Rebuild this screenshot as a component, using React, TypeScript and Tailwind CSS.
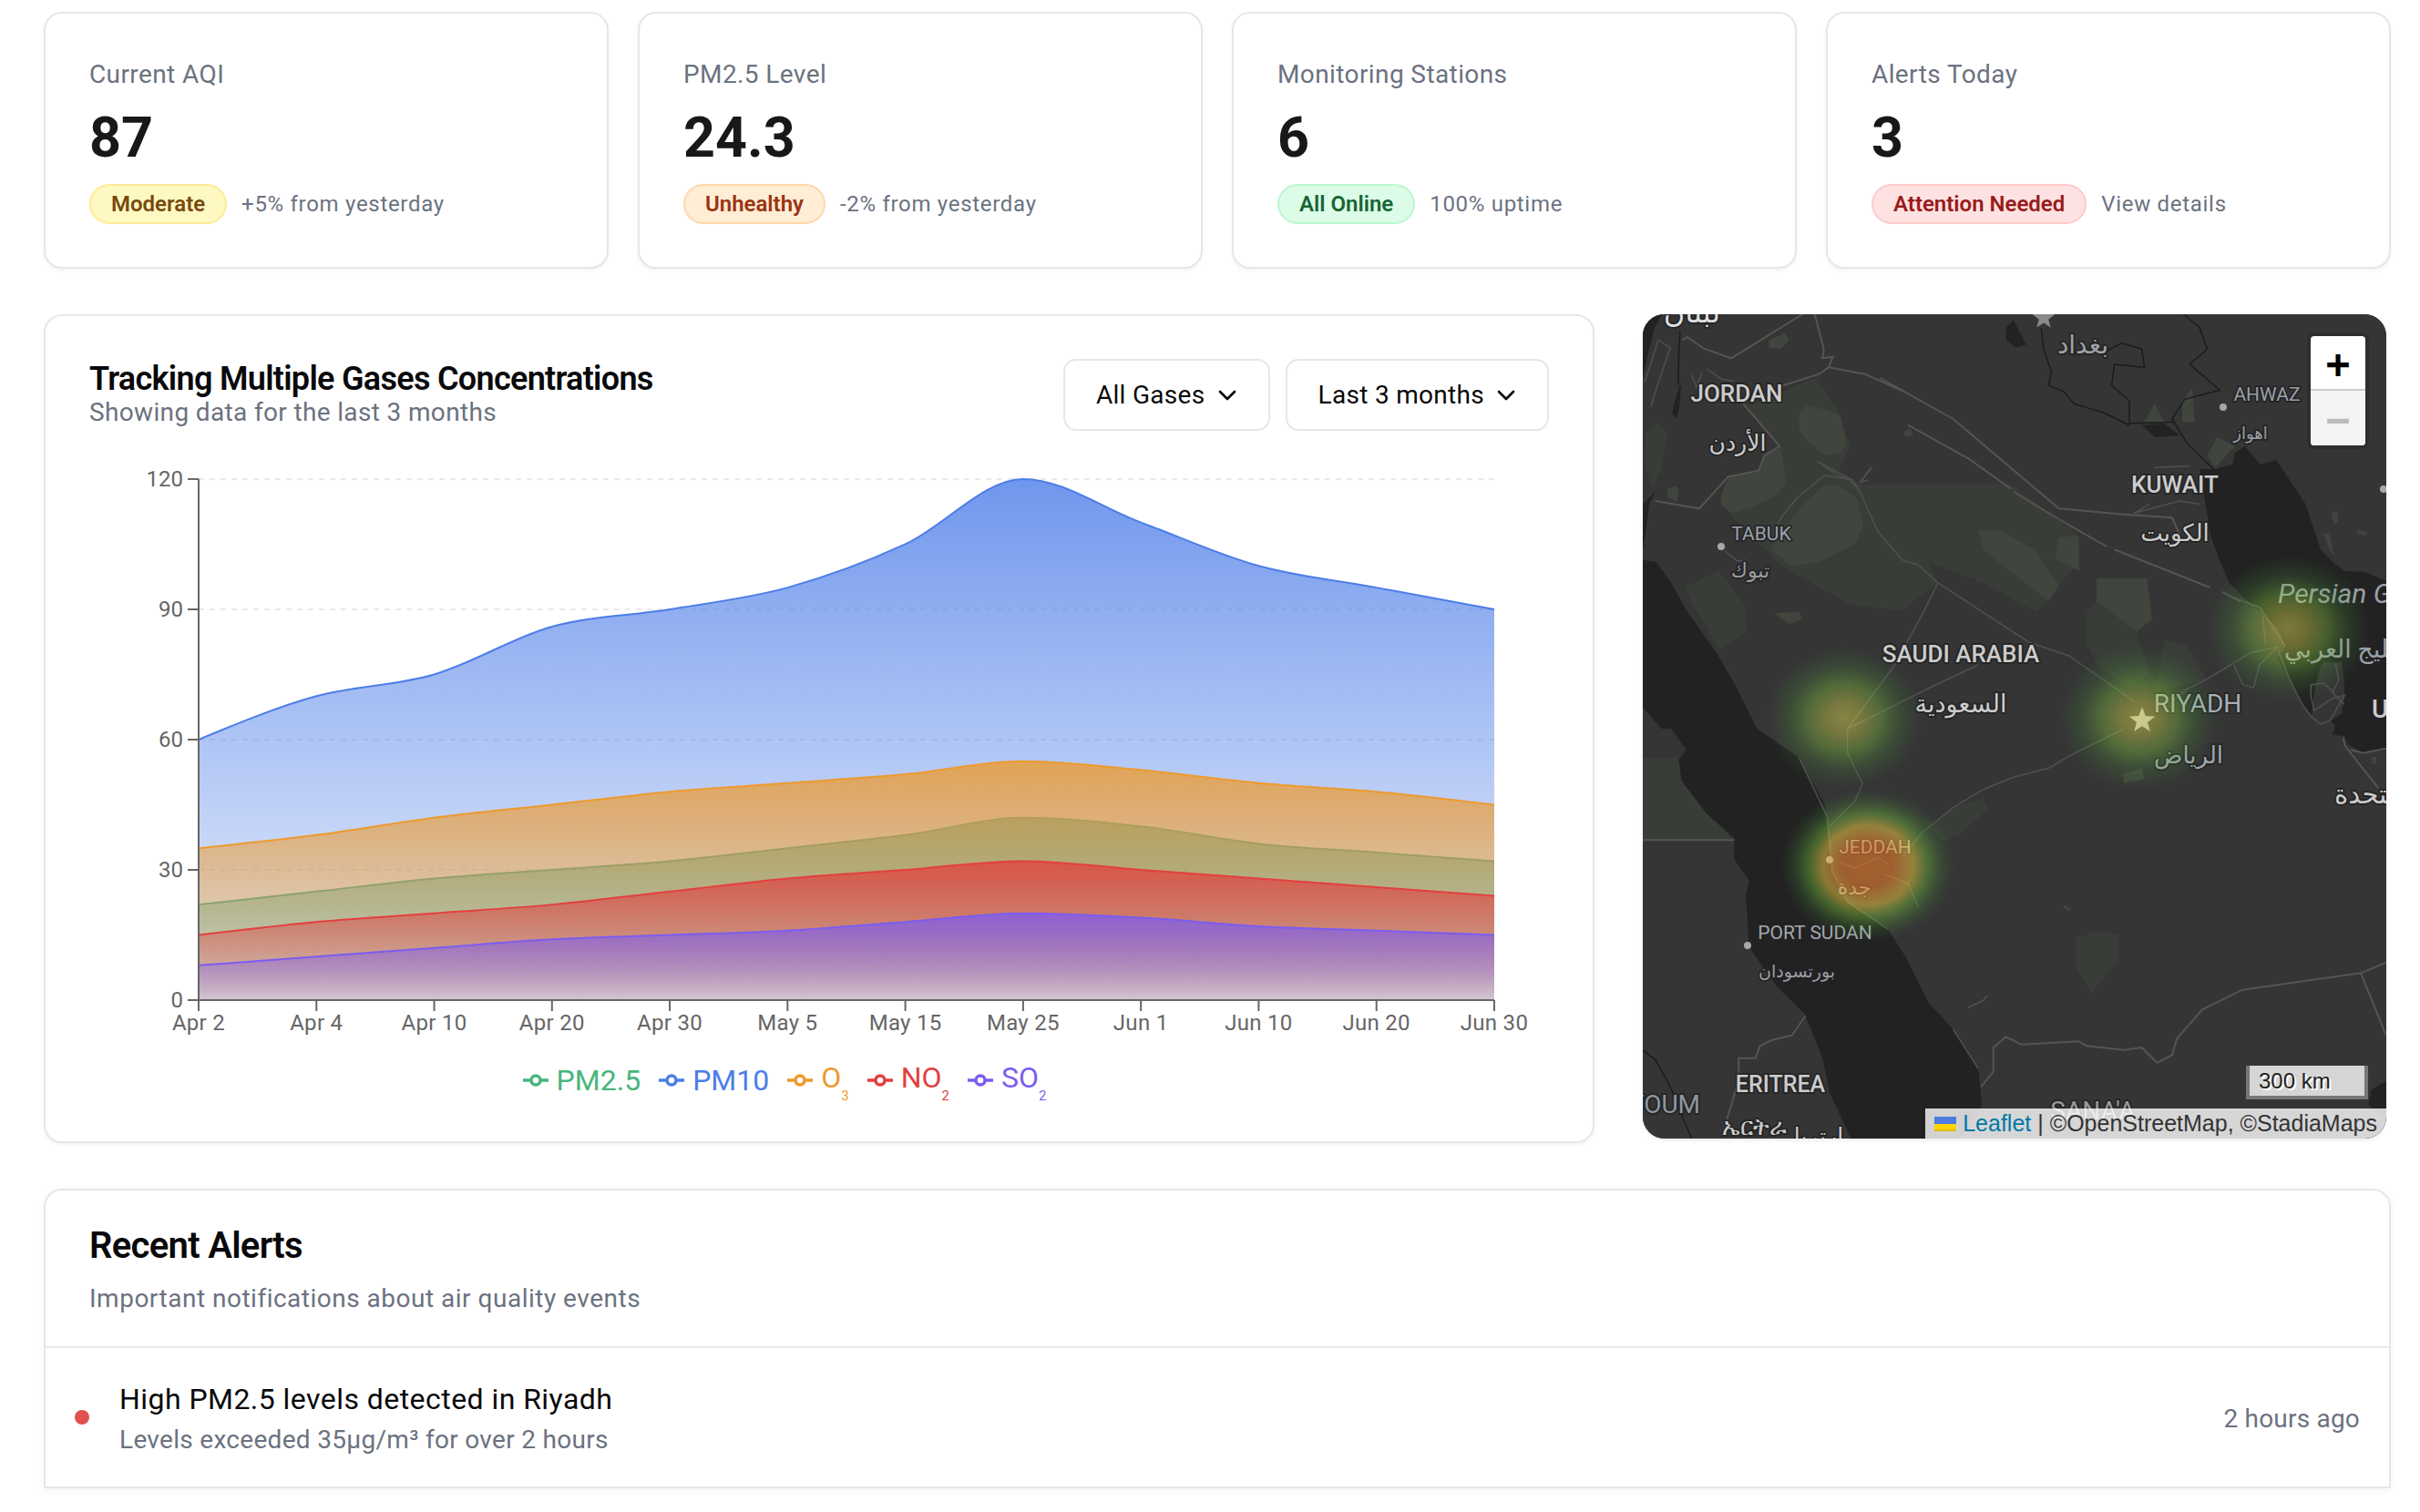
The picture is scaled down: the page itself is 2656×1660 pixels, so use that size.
import React from "react";
import { ChevronDown } from "lucide-react";

const FONT = "font-['Roboto','Liberation_Sans',sans-serif]";

/* ---------- stats ---------- */
const stats = [
  { label: "Current AQI", value: "87", badge: "Moderate", cls: "bg-[#fef9c3] border-[#fdeb94] text-[#78490f]", note: "+5% from yesterday" },
  { label: "PM2.5 Level", value: "24.3", badge: "Unhealthy", cls: "bg-[#ffedd5] border-[#fed7aa] text-[#9a3412]", note: "-2% from yesterday" },
  { label: "Monitoring Stations", value: "6", badge: "All Online", cls: "bg-[#dcfce7] border-[#bbf7d0] text-[#166534]", note: "100% uptime" },
  { label: "Alerts Today", value: "3", badge: "Attention Needed", cls: "bg-[#fee2e2] border-[#fecaca] text-[#991b1b]", note: "View details" },
];

function StatCard({ s }: { s: (typeof stats)[number] }) {
  return (
    <div className="h-[282px] rounded-[20px] border-2 border-[#e5e7eb] bg-white px-12 pt-[50px] shadow-[0_2px_4px_rgba(0,0,0,0.05)]">
      <div className="text-[28px] leading-[34px] tracking-[0.4px] text-[#6b7280]">{s.label}</div>
      <div className="mt-[16px] text-[61px] font-bold leading-[72px] text-[#18181b]">{s.value}</div>
      <div className="mt-[15px] flex items-center gap-4">
        <span className={`flex h-[44px] items-center rounded-full border-2 px-[22px] text-[24px] font-semibold ${s.cls}`}>{s.badge}</span>
        <span className="text-[24px] tracking-[0.7px] text-[#6b7280]">{s.note}</span>
      </div>
    </div>
  );
}

/* ---------- chart ---------- */
const labels = ["Apr 2", "Apr 4", "Apr 10", "Apr 20", "Apr 30", "May 5", "May 15", "May 25", "Jun 1", "Jun 10", "Jun 20", "Jun 30"];
const series = [
  { id: "pm25", color: "#48b57c", data: [22, 25, 28, 30, 32, 35, 38, 42, 40, 36, 34, 32] },
  { id: "pm10", color: "#4c7de8", data: [60, 70, 75, 86, 90, 95, 105, 120, 110, 100, 95, 90] },
  { id: "o3", color: "#ed9a2e", data: [35, 38, 42, 45, 48, 50, 52, 55, 53, 50, 48, 45] },
  { id: "no2", color: "#e2403f", data: [15, 18, 20, 22, 25, 28, 30, 32, 30, 28, 26, 24] },
  { id: "so2", color: "#7c5cf0", data: [8, 10, 12, 14, 15, 16, 18, 20, 19, 17, 16, 15] },
];
const X0 = 120; // svg coords: svg starts at page x=98, y=500
const Y0 = 598;
const PXX = 129.27;
const PXY = 4.767;
const px = (i: number) => X0 + i * PXX;
const py = (v: number) => Y0 - v * PXY;

function monotonePath(ys: number[]) {
  const n = ys.length;
  const xs = ys.map((_, i) => px(i));
  const yy = ys.map(py);
  const sign = (v: number) => (v < 0 ? -1 : 1);
  const t: number[] = new Array(n).fill(0);
  for (let i = 1; i < n - 1; i++) {
    const h0 = xs[i] - xs[i - 1];
    const h1 = xs[i + 1] - xs[i];
    const s0 = (yy[i] - yy[i - 1]) / h0;
    const s1 = (yy[i + 1] - yy[i]) / h1;
    const p = (s0 * h1 + s1 * h0) / (h0 + h1);
    t[i] = (sign(s0) + sign(s1)) * Math.min(Math.abs(s0), Math.abs(s1), 0.5 * Math.abs(p)) || 0;
  }
  t[0] = (3 * (yy[1] - yy[0])) / (xs[1] - xs[0]) / 2 - t[1] / 2;
  t[n - 1] = (3 * (yy[n - 1] - yy[n - 2])) / (xs[n - 1] - xs[n - 2]) / 2 - t[n - 2] / 2;
  let d = `M${xs[0]},${yy[0]}`;
  for (let i = 0; i < n - 1; i++) {
    const dx = (xs[i + 1] - xs[i]) / 3;
    d += `C${xs[i] + dx},${yy[i] + dx * t[i]} ${xs[i + 1] - dx},${yy[i + 1] - dx * t[i + 1]} ${xs[i + 1]},${yy[i + 1]}`;
  }
  return d;
}

function Chart() {
  return (
    <svg width="1602" height="650" className="block font-['Roboto','Liberation_Sans',sans-serif]">
      <defs>
        {series.map((s) => (
          <linearGradient key={s.id} id={`g-${s.id}`} x1="0" y1="0" x2="0" y2="1">
            <stop offset="0%" stopColor={s.color} stopOpacity="0.8" />
            <stop offset="100%" stopColor={s.color} stopOpacity="0.1" />
          </linearGradient>
        ))}
      </defs>
      {[120, 90, 60, 30].map((v) => (
        <line key={v} x1={X0} x2={px(11)} y1={py(v)} y2={py(v)} stroke="#e9e9e9" strokeWidth="2" strokeDasharray="6 6" />
      ))}
      {series.map((s) => {
        const d = monotonePath(s.data);
        return (
          <g key={s.id}>
            <path d={`${d}L${px(11)},${Y0}L${X0},${Y0}Z`} fill={`url(#g-${s.id})`} />
            <path d={d} fill="none" stroke={s.color} strokeWidth="2" />
          </g>
        );
      })}
      <line x1={X0} x2={X0} y1={py(120)} y2={Y0} stroke="#666" strokeWidth="2" />
      <line x1={X0} x2={px(11)} y1={Y0} y2={Y0} stroke="#666" strokeWidth="2" />
      {[0, 30, 60, 90, 120].map((v) => (
        <g key={v}>
          <line x1={X0 - 12} x2={X0} y1={py(v)} y2={py(v)} stroke="#666" strokeWidth="2" />
          <text x={X0 - 17} y={py(v) + 8} textAnchor="end" fontSize="24" fill="#666">{v}</text>
        </g>
      ))}
      {labels.map((l, i) => (
        <g key={l}>
          <line x1={px(i)} x2={px(i)} y1={Y0} y2={Y0 + 12} stroke="#666" strokeWidth="2" />
          <text x={px(i)} y={Y0 + 33} textAnchor="middle" fontSize="24" letterSpacing="0.3" fill="#666">{l}</text>
        </g>
      ))}
    </svg>
  );
}

function LegendIcon({ color }: { color: string }) {
  return (
    <svg width="28" height="16" viewBox="0 0 28 16" className="block">
      <line x1="0" x2="28" y1="8" y2="8" stroke={color} strokeWidth="3.5" />
      <circle cx="14" cy="8" r="5" fill="#fff" stroke={color} strokeWidth="3.5" />
    </svg>
  );
}

const legend = [
  { color: "#48b57c", text: "PM2.5", sub: "" },
  { color: "#4c7de8", text: "PM10", sub: "" },
  { color: "#ed9a2e", text: "O", sub: "3" },
  { color: "#e2403f", text: "NO", sub: "2" },
  { color: "#7c5cf0", text: "SO", sub: "2" },
];

/* ---------- map ---------- */
const mk = (ox: number, f: number, oy: number) => (p: number[]) => {
  const out: string[] = [];
  for (let i = 0; i < p.length; i += 2) out.push(`${(ox + p[i] / f).toFixed(1)},${(oy + p[i + 1] / 3).toFixed(1)}`);
  return out.join(" ");
};
const Z3 = mk(1790, 1.81, 340);
const Z4 = mk(1790, 1.81, 800);
const Z10 = mk(2380, 3, 560);
const Z11 = mk(1790, 3, 340);
const Z12 = mk(1790, 3, 1080);

const water = [
  // Red Sea
  Z3([0, 820, 50, 830, 80, 900, 110, 990, 170, 1130, 205, 1230, 250, 1380]) + " " +
    Z4([330, 90, 385, 250, 390, 330, 400, 470, 430, 570, 510, 660, 545, 750, 590, 900, 640, 990, 690, 1120, 697, 1240, 650, 1360, 440, 1360, 395, 1200, 380, 1080, 345, 940, 290, 850, 235, 720, 228, 550, 235, 500, 205, 430, 205, 360, 150, 280, 100, 170, 95, 100, 110, 70, 80, 0]) + " " +
    Z3([60, 1380, 24, 1310, 0, 1310]),
  // Persian Gulf
  Z3([1130, 525, 1160, 525, 1195, 510, 1200, 470, 1220, 450, 1250, 510, 1282, 495, 1340, 640, 1370, 790, 1400, 840]) + " " +
    Z10([580, 200, 650, 205, 730, 240, 730, 785, 640, 800, 590, 770, 580, 745, 540, 740, 550, 710, 535, 695, 570, 670, 580, 620, 578, 560, 570, 500, 510, 500, 495, 530, 480, 600, 470, 680, 440, 640, 400, 560, 360, 490, 385, 450, 360, 390, 310, 340, 250, 290, 200, 240, 170, 170, 140, 90]),
  // Aqaba, Med, Dead Sea, lake
  Z11([80, 600, 60, 640, 50, 720, 40, 790, 30, 790, 30, 650]),
  Z11([30, 0, 110, 0, 78, 60, 60, 130, 40, 220, 30, 220]),
  Z11([160, 250, 145, 300, 135, 340, 150, 358, 158, 330, 165, 250]),
  Z3([745, 60, 760, 35, 785, 115, 765, 125, 745, 100]),
  Z3([1015, 380, 1060, 375, 1090, 415, 1040, 420]),
  Z4([1500, 1160, 1470, 1190, 1465, 1240, 1500, 1280]),
];
const park1 = [
  Z3([230, 320, 365, 225, 410, 330, 435, 450, 410, 540, 455, 575, 755, 575, 890, 745, 880, 850, 805, 995, 700, 900, 590, 830, 610, 900, 540, 990, 440, 975, 300, 845, 200, 680, 180, 620, 300, 460]),
  Z3([105, 915, 175, 860, 225, 970, 230, 1060, 175, 1120]),
  Z3([905, 1000, 925, 960, 1005, 1060, 1030, 1200, 990, 1240, 930, 1180, 905, 1100]),
  Z3([1060, 1090, 1100, 1100, 1145, 1220, 1040, 1260]),
  Z4([0, 95, 95, 95, 110, 170, 200, 365, 0, 365]),
  Z4([585, 310, 610, 305, 640, 260, 700, 230, 710, 265, 650, 350, 620, 370]),
  Z4([885, 690, 930, 665, 970, 680, 970, 760, 915, 870, 885, 790]),
  Z11([50, 400, 90, 370, 120, 410, 100, 530, 70, 590, 45, 500]),
];
const park2 = [
  Z11([555, 340, 580, 315, 640, 330, 690, 350, 710, 440, 690, 470, 640, 480, 590, 440, 555, 400]),
  Z11([300, 600, 325, 550, 420, 530, 440, 480, 495, 455, 510, 570, 480, 610, 400, 650, 330, 670, 295, 640]),
  Z11([480, 750, 560, 650, 640, 575, 680, 580, 745, 620, 765, 710, 740, 770, 620, 830, 530, 845, 460, 790]),
  Z3([690, 725, 730, 725, 800, 790, 850, 910, 830, 960, 760, 870, 700, 790]),
  Z3([850, 750, 890, 745, 890, 860, 843, 820]),
  Z3([925, 885, 1025, 885, 1035, 1020, 1005, 1060, 925, 960]),
  Z3([285, 1000, 335, 995, 340, 1020, 315, 1035]),
  Z3([543, 400, 555, 390, 560, 415, 545, 420]),
  Z11([120, 590, 150, 580, 158, 600, 150, 635, 120, 615]),
  Z11([455, 100, 510, 75, 520, 100, 495, 130, 455, 125]),
  Z4([975, 150, 1015, 130, 1020, 165, 980, 180]),
  Z3([1020, 370, 1040, 310, 1060, 370]),
  Z3([1095, 300, 1115, 260, 1120, 370, 1095, 370]),
  Z3([1145, 480, 1165, 420, 1200, 450, 1160, 520]),
  Z10([535, 10, 555, 5, 560, 40, 545, 45]),
  Z10([615, 65, 650, 70, 650, 85, 625, 78]),
  Z10([510, 75, 530, 80, 545, 150, 530, 130]),
  Z10([668, 815, 685, 810, 685, 835, 668, 835]),
];
const borders = [
  Z11([565, 15, 330, 160, 240, 128, 185, 90, 170, 100]),
  Z11([605, 15, 635, 130, 630, 160, 665, 155, 650, 190, 620, 212, 500, 250]),
  Z11([650, 190, 770, 212, 900, 270]),
  Z11([370, 310, 490, 450, 440, 480, 420, 530, 320, 550, 225, 655, 80, 630]),
  Z3([495, 225, 640, 360, 850, 655, 985, 675, 1075, 685, 1095, 760]),
  Z3([850, 690, 945, 780]),
  Z3([960, 790, 1150, 915]),
  Z3([1175, 930, 1210, 960]),
  Z3([550, 380, 670, 490, 755, 590]),
  Z3([760, 600, 850, 690]),
  Z4([1500, 770, 1450, 805, 1215, 860, 1135, 925, 1085, 1020, 1075, 1075, 1045, 1100, 1015, 1050, 980, 1058, 905, 1045, 890, 1030, 775, 1040, 745, 1015, 720, 1050, 720, 1130, 695, 1180]),
  Z4([1450, 805, 1500, 1010]),
  Z12([575, 105, 530, 170, 465, 185, 425, 205, 410, 245, 355, 245, 355, 290, 345, 350, 300, 500]),
  Z4([0, 367, 205, 367]),
  Z10([575, 750, 580, 775, 690, 915]),
  Z10([600, 790, 640, 800, 717, 785]),
];
const roads = [
  Z3([370, 500, 440, 560, 455, 600, 490, 730, 540, 825, 570, 840, 610, 900, 790, 1095, 870, 1140, 1000, 1290]),
  Z3([440, 560, 385, 545, 330, 620, 300, 680, 290, 715]),
  Z3([455, 570, 478, 520]),
  Z3([610, 900, 580, 1000, 520, 1180, 430, 1380]),
  Z3([690, 1170, 600, 1240, 430, 1380]),
  Z4([430, 0, 430, 80, 460, 180, 445, 240, 395, 320]),
  Z4([335, 100, 390, 290, 400, 470, 430, 570, 510, 660]),
  Z4([980, 0, 870, 90, 830, 130, 760, 160, 700, 200, 640, 260, 580, 340, 540, 420]),
  Z4([505, 480, 550, 510, 572, 590]),
  Z4([415, 440, 445, 460, 490, 425, 510, 445]),
  Z10([360, 450, 270, 470, 130, 555, 60, 590, 0, 640]),
  Z10([360, 450, 300, 510, 280, 585, 245, 575, 215, 510]),
  Z10([385, 450, 300, 320, 220, 290]),
  Z10([360, 460, 400, 560, 440, 640, 470, 680]),
  Z10([320, 440, 310, 350]),
  Z10([470, 680, 500, 705, 530, 695, 580, 610, 540, 620, 480, 660, 468, 610, 470, 575, 510, 570, 545, 600]),
  Z10([550, 505, 560, 560, 540, 600, 578, 640]),
  Z11([45, 240, 90, 100, 130, 125, 90, 240, 65, 320]),
  Z11([250, 195, 300, 230, 340, 235]),
  Z11([200, 215, 215, 255, 235, 205]),
  Z11([310, 795, 350, 828, 380, 825]),
  Z11([615, 500, 680, 545, 720, 560, 755, 600]),
  Z11([792, 518, 755, 568, 780, 562]),
  Z4([860, 585, 872, 598]),
  Z4([670, 918, 700, 895, 708, 878]),
  Z4([640, 990, 690, 1120]),
  Z3([1030, 640, 1000, 670]),
  Z3([1000, 670, 1090, 630, 1130, 640]),
  Z3([1040, 520, 1110, 515]),
];
const darkLines = [
  Z11([162, 70, 158, 130, 155, 250]),
  Z3([815, 60, 820, 130, 835, 205, 830, 250, 860, 270, 880, 310, 940, 340, 990, 380]),
  Z3([945, 135, 975, 110, 1015, 130, 1020, 190, 960, 180, 955, 250, 990, 300, 990, 375, 1080, 370]),
  Z3([1095, 10, 1130, 60, 1145, 130, 1110, 180, 1170, 265, 1100, 295, 1075, 360, 1105, 440, 1160, 530]),
  Z12([40, 220, 80, 250, 130, 340, 170, 440, 200, 510]),
];

type L = { t: string; x: number; y: number; s: number; c: string; a?: "start" | "middle" | "end"; w?: number; i?: boolean };
const mapLabels: L[] = [
  { t: "لبنان", x: 1857, y: 354, s: 32, c: "#ddd", a: "middle" },
  { t: "JORDAN", x: 1906, y: 441, s: 26, c: "#ccc", a: "middle", w: 500 },
  { t: "الأردن", x: 1907, y: 495, s: 25, c: "#ccc", a: "middle" },
  { t: "TABUK", x: 1933, y: 593, s: 21, c: "#9aa1ad", a: "middle" },
  { t: "تبوك", x: 1921, y: 634, s: 22, c: "#9a9aa0", a: "middle" },
  { t: "بغداد", x: 2286, y: 388, s: 28, c: "#a0a0a8", a: "middle" },
  { t: "AHWAZ", x: 2488, y: 440, s: 21, c: "#999fa8", a: "middle" },
  { t: "اهواز", x: 2470, y: 482, s: 18, c: "#999fa8", a: "middle" },
  { t: "KUWAIT", x: 2387, y: 541, s: 26, c: "#ccc", a: "middle", w: 500 },
  { t: "الكويت", x: 2387, y: 594, s: 26, c: "#ccc", a: "middle" },
  { t: "SAUDI ARABIA", x: 2152, y: 727, s: 26, c: "#ccc", a: "middle", w: 500 },
  { t: "السعودية", x: 2152, y: 782, s: 27, c: "#ccc", a: "middle" },
  { t: "Persian Gulf", x: 2500, y: 662, s: 30, c: "#9aa0a8", a: "start", i: true },
  { t: "الخليج العربي", x: 2507, y: 722, s: 27, c: "#9aa0a8", a: "start" },
  { t: "RIYADH", x: 2412, y: 782, s: 28, c: "#a8aeb8", a: "middle" },
  { t: "الرياض", x: 2402, y: 838, s: 26, c: "#a0a6ad", a: "middle" },
  { t: "U.A.E", x: 2603, y: 788, s: 28, c: "#ccc", a: "start", w: 500 },
  { t: "الإمارات العربية المتحدة", x: 2562, y: 882, s: 29, c: "#ccc", a: "start" },
  { t: "JEDDAH", x: 2058, y: 937, s: 21, c: "#a4a8b0", a: "middle" },
  { t: "جدة", x: 2035, y: 982, s: 22, c: "#a4a8b0", a: "middle" },
  { t: "PORT SUDAN", x: 1992, y: 1031, s: 21, c: "#a4a8b0", a: "middle" },
  { t: "بورتسودان", x: 1972, y: 1073, s: 19, c: "#9a9ea6", a: "middle" },
  { t: "ERITREA", x: 1954, y: 1199, s: 25, c: "#ccc", a: "middle", w: 500 },
  { t: "ኤርትራ", x: 1925, y: 1246, s: 26, c: "#ccc", a: "middle" },
  { t: "ارتريا", x: 1996, y: 1256, s: 25, c: "#ccc", a: "middle" },
  { t: "KHARTOUM", x: 1866, y: 1222, s: 28, c: "#8f96a0", a: "end" },
  { t: "SANA'A", x: 2297, y: 1229, s: 28, c: "#9a9a9a", a: "middle" },
];

const starPts = (cx: number, cy: number, r: number) => {
  const o: string[] = [];
  for (let i = 0; i < 10; i++) {
    const a = -Math.PI / 2 + (i * Math.PI) / 5;
    const q = i % 2 ? r * 0.42 : r;
    o.push(`${(cx + q * Math.cos(a)).toFixed(1)},${(cy + q * Math.sin(a)).toFixed(1)}`);
  }
  return o.join(" ");
};

function MapCanvas() {
  return (
    <svg viewBox="1803 345 816 905" width="816" height="905" className="block font-['Roboto','DejaVu_Sans',sans-serif]">
      <defs>
        <radialGradient id="heat">
          <stop offset="0%" stopColor="#f0e858" stopOpacity="0.44" />
          <stop offset="22%" stopColor="#dcdc50" stopOpacity="0.4" />
          <stop offset="48%" stopColor="#84c841" stopOpacity="0.36" />
          <stop offset="72%" stopColor="#50a83c" stopOpacity="0.18" />
          <stop offset="100%" stopColor="#3c9636" stopOpacity="0" />
        </radialGradient>
        <radialGradient id="heat-hot">
          <stop offset="0%" stopColor="#f5802b" stopOpacity="0.58" />
          <stop offset="28%" stopColor="#f5802b" stopOpacity="0.55" />
          <stop offset="52%" stopColor="#f0c842" stopOpacity="0.52" />
          <stop offset="68%" stopColor="#78c33c" stopOpacity="0.4" />
          <stop offset="85%" stopColor="#50a83c" stopOpacity="0.16" />
          <stop offset="100%" stopColor="#3c9636" stopOpacity="0" />
        </radialGradient>
      </defs>
      <rect x="1803" y="345" width="816" height="905" fill="#353535" />
      {park1.map((p, i) => <polygon key={i} points={p} fill="#393d38" />)}
      {park2.map((p, i) => <polygon key={i} points={p} fill="#40463e" />)}
      {water.map((p, i) => <polygon key={i} points={p} fill="#222222" />)}
      {roads.map((p, i) => <polyline key={i} points={p} fill="none" stroke="#505050" strokeWidth="1.5" />)}
      {borders.map((p, i) => <polyline key={i} points={p} fill="none" stroke="#595353" strokeWidth="2" />)}
      {darkLines.map((p, i) => <polyline key={i} points={p} fill="none" stroke="#1c1c1c" strokeWidth="1.5" />)}
      {[[1889, 600], [2440, 447], [2616, 537], [2008, 944], [1918, 1038]].map(([x, y]) => (
        <circle key={x} cx={x} cy={y} r="4" fill="#a8a8a8" />
      ))}
      <polygon points={starPts(2351, 791, 15)} fill="#b4b4b4" />
      <polygon points={starPts(2243, 349, 13)} fill="#8a8a8a" />
      {mapLabels.map((l) => (
        <text
          key={l.t}
          x={l.x}
          y={l.y}
          fontSize={l.s}
          fill={l.c}
          textAnchor={l.a}
          fontWeight={l.w ?? 400}
          fontStyle={l.i ? "italic" : "normal"}
          stroke="#222222"
          strokeOpacity="0.75"
          strokeWidth="4"
          strokeLinejoin="round"
          className="[paint-order:stroke]"
        >
          {l.t}
        </text>
      ))}
      <ellipse cx="2024" cy="788" rx="86" ry="78" fill="url(#heat)" />
      <ellipse cx="2348" cy="788" rx="88" ry="80" fill="url(#heat)" />
      <ellipse cx="2512" cy="690" rx="90" ry="80" fill="url(#heat)" />
      <ellipse cx="2050" cy="950" rx="96" ry="84" fill="url(#heat-hot)" />
    </svg>
  );
}

function MapCard() {
  return (
    <div className="relative ml-[53px] h-[905px] w-[816px] overflow-hidden rounded-[24px] bg-[#353535] shadow-[0_2px_4px_rgba(0,0,0,0.08)]">
      <MapCanvas />
      <div className="absolute right-[23px] top-[24px] flex h-[120px] w-[60px] flex-col overflow-hidden rounded-[4px] bg-white font-['DejaVu_Sans_Mono','Liberation_Mono',monospace] shadow-[0_0_0_4px_rgba(0,0,0,0.12)]">
        <div className="flex h-[60px] items-center justify-center border-b-2 border-[#ccc] pt-[4px] text-[44px] font-bold leading-none text-black">+</div>
        <div className="flex h-[60px] items-center justify-center bg-[#f4f4f4] pt-[4px] text-[44px] font-bold leading-none text-[#bbb]">−</div>
      </div>
      <div className="absolute bottom-[43px] right-[20px] flex h-[37px] w-[134px] items-center border-x-4 border-b-4 border-[#777] bg-[rgba(255,255,255,0.8)] pl-[10px] font-['Liberation_Sans',sans-serif] text-[24px] text-[#222] [text-shadow:2px_2px_0_#fff]">300 km</div>
      <div className="absolute bottom-0 right-0 flex h-[33px] items-center gap-[7px] bg-[rgba(255,255,255,0.8)] pl-[10px] pr-[10px] font-['Liberation_Sans',sans-serif] text-[25px] text-[#333]">
        <svg width="24" height="16" viewBox="0 0 12 8" className="block">
          <rect width="12" height="4" fill="#4C7BE1" />
          <rect y="4" width="12" height="3" fill="#FFD500" />
          <rect y="7" width="12" height="1" fill="#E0BC00" />
        </svg>
        <span className="text-[#0078a8]">Leaflet</span>
        <span>|</span>
        <span>©OpenStreetMap, ©StadiaMaps</span>
      </div>
    </div>
  );
}

function Button({ label }: { label: string }) {
  return (
    <button className="flex h-[79px] items-center gap-[8px] rounded-[14px] border-2 border-[#e5e7eb] bg-white pl-[34px] pr-[29px] text-[28px] tracking-[0.3px] text-[#09090b]">
      {label}
      <ChevronDown size={32} strokeWidth={2} />
    </button>
  );
}

export default function App() {
  return (
    <div className={`h-[1660px] overflow-hidden bg-white pb-0 pl-12 pr-8 pt-[13px] ${FONT}`}>
      <div className="grid grid-cols-4 gap-8">
        {stats.map((s) => <StatCard key={s.label} s={s} />)}
      </div>

      <div className="mt-[50px] flex items-start">
        <div className="h-[910px] w-[1702px] rounded-[20px] border-2 border-[#e5e7eb] bg-white pl-12 pr-12 pt-[47px] shadow-[0_2px_4px_rgba(0,0,0,0.05)]">
          <div className="flex h-[106px] items-start justify-between">
            <div>
              <div className="text-[36px] font-semibold leading-[44px] tracking-[-0.7px] text-[#09090b]">Tracking Multiple Gases Concentrations</div>
              <div className="mt-[-2px] text-[28px] leading-[34px] tracking-[0.35px] text-[#6b7280]">Showing data for the last 3 months</div>
            </div>
            <div className="flex gap-[17px]">
              <Button label="All Gases" />
              <Button label="Last 3 months" />
            </div>
          </div>
          <Chart />
          <div className="mt-[16px] flex w-[1526px] justify-center gap-[20px]">
            {legend.map((l) => (
              <div key={l.color} className="flex h-[40px] items-center gap-[9px] text-[32px] leading-[40px]" style={{ color: l.color }}>
                <LegendIcon color={l.color} />
                <span>{l.text}{l.sub && <span className="relative top-[14px] text-[15px]">{l.sub}</span>}</span>
              </div>
            ))}
          </div>
        </div>
        <MapCard />
      </div>

      <div className="mt-[50px] rounded-t-[20px] border-x-2 border-t-2 border-[#e5e7eb] bg-white shadow-[0_2px_8px_rgba(0,0,0,0.05)]">
        <div className="h-[173px] border-b-2 border-[#e5e7eb] px-12 pt-[37px]">
          <div className="text-[40px] font-semibold leading-[48px] tracking-[-0.7px] text-[#09090b]">Recent Alerts</div>
          <div className="mt-[17px] text-[28px] leading-[34px] tracking-[0.5px] text-[#6b7280]">Important notifications about air quality events</div>
        </div>
        <div className="flex h-[154px] items-center gap-[33px] border-b-2 border-[#e5e7eb] pl-8 pr-8">
          <span className="h-4 w-4 rounded-full bg-[#e0524f]" />
          <div className="flex-1 pt-[3px]">
            <div className="text-[32px] leading-[40px] tracking-[0.45px] text-[#09090b]">High PM2.5 levels detected in Riyadh</div>
            <div className="mt-[7px] text-[28px] leading-[36px] tracking-[0.3px] text-[#6b7280]">Levels exceeded 35µg/m³ for over 2 hours</div>
          </div>
          <div className="pt-[4px] text-[28px] tracking-[0.2px] text-[#6b7280]">2 hours ago</div>
        </div>
      </div>
    </div>
  );
}
